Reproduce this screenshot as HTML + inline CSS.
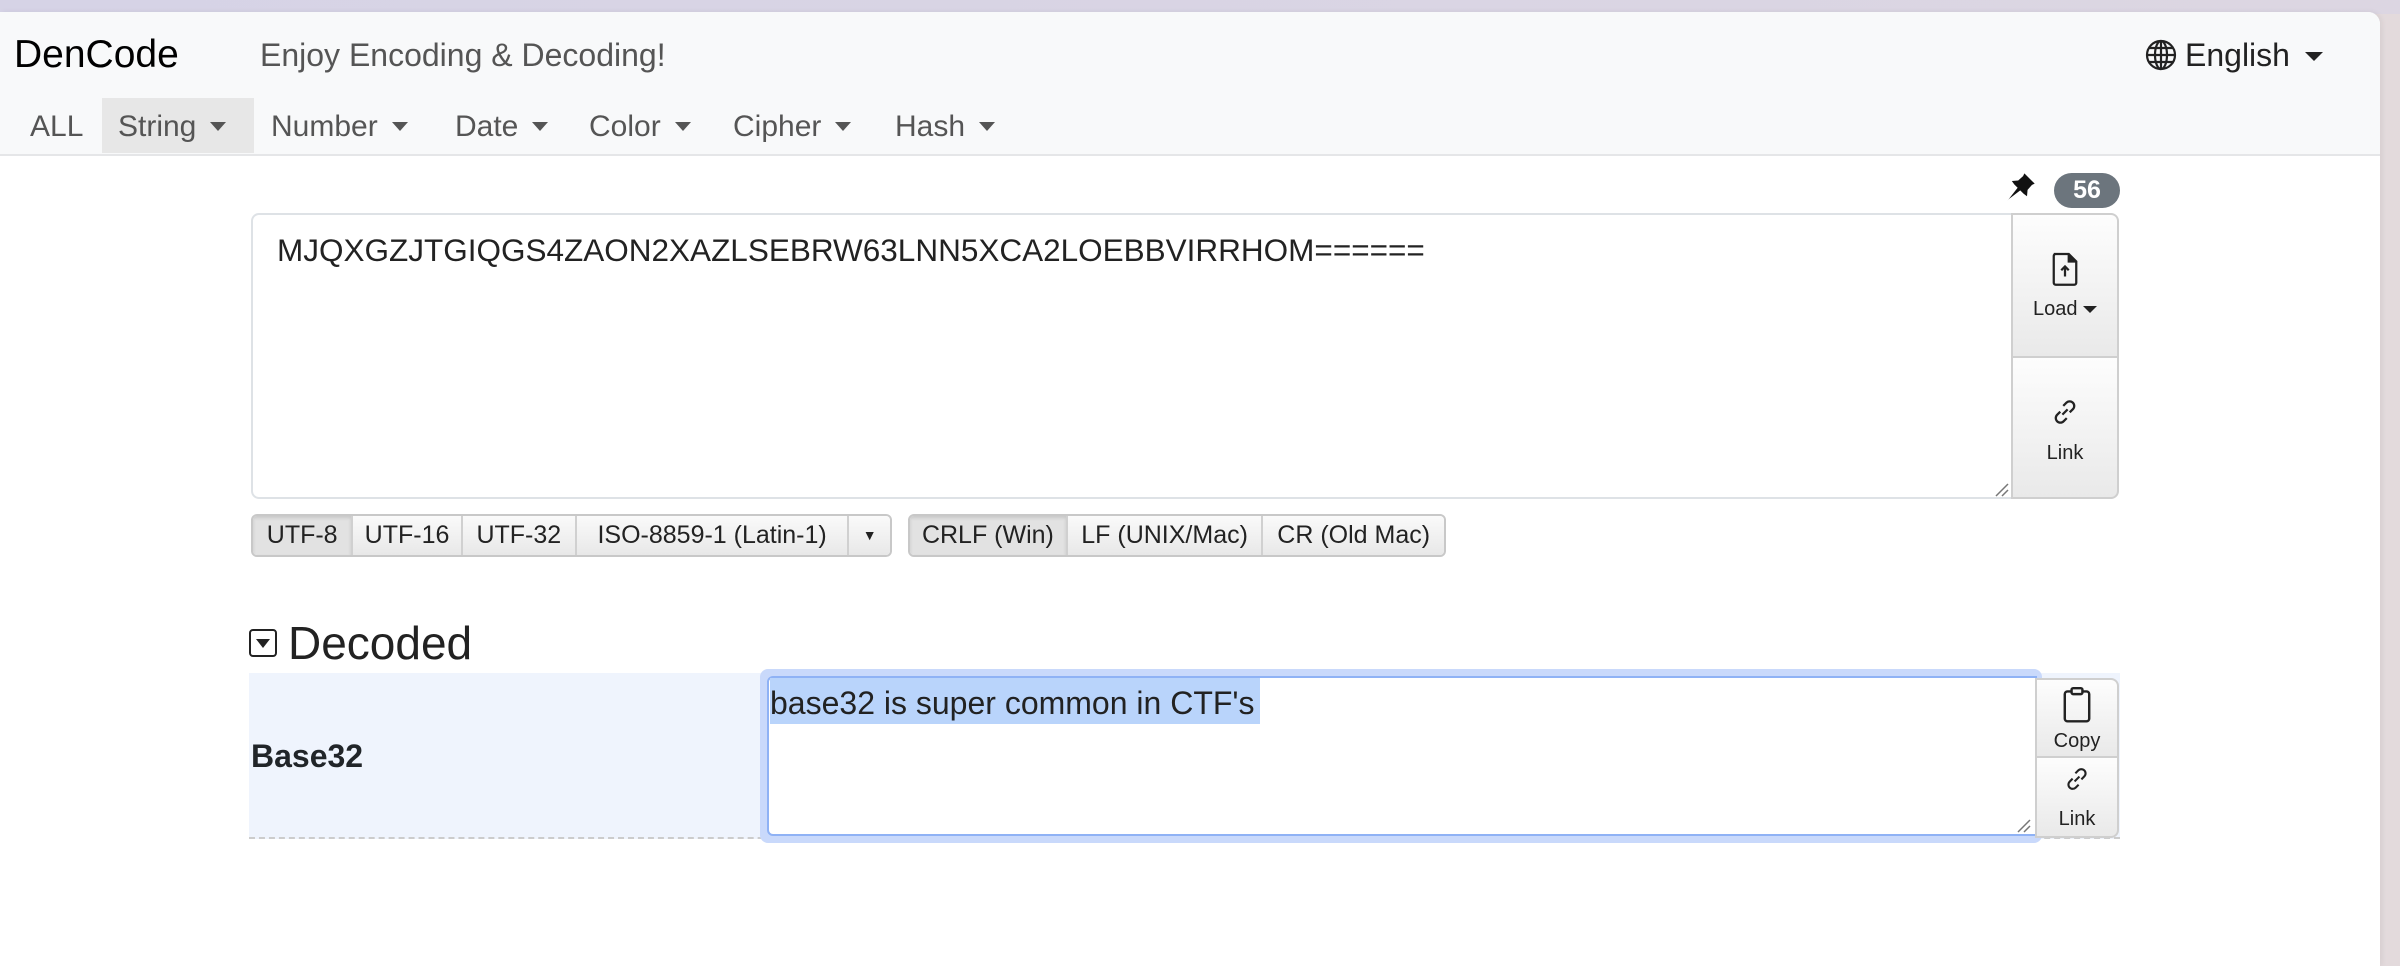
<!DOCTYPE html>
<html><head><meta charset="utf-8"><style>
*{box-sizing:border-box;margin:0;padding:0}
body{width:2400px;height:966px;overflow:hidden;background:#e3dadc;font-family:"Liberation Sans",sans-serif;position:relative;color:#212529}
.top{position:absolute;left:0;top:0;width:2400px;height:14px;background:linear-gradient(90deg,#d6d3e6,#dcd6e2)}
.win{position:absolute;left:0;top:12px;width:2380px;height:954px;background:#fff;border-top-right-radius:12px;overflow:hidden;box-shadow:2px 0 6px rgba(0,0,0,.06)}
.hdr{position:absolute;left:0;top:0;width:2380px;height:144px;background:#f8f9fa;border-bottom:2px solid #e5e6e8}
.a{position:absolute;white-space:nowrap}
.nav{font-size:30px;color:#555;top:95px;line-height:40px}
.car{display:inline-block;width:0;height:0;border-left:8px solid transparent;border-right:8px solid transparent;border-top:9px solid #555;vertical-align:middle;margin-left:14px;margin-top:-4px}
.ta{position:absolute;border:2px solid #dee2e6;background:#fff}
.btn{position:absolute;background:linear-gradient(#fdfdfd,#e9e9e9);border:2px solid #cfcfcf;text-align:center;font-size:20px;color:#222}
.grp{position:absolute;top:502px;height:43px;border:2px solid #c8c8c8;border-radius:6px;display:flex;overflow:hidden;font-size:25px;color:#222}
.grp div{height:100%;line-height:39px;text-align:center;border-right:2px solid #d0d0d0;background:linear-gradient(#fafafa,#e8e8e8)}
.grp div:last-child{border-right:none}
.grp .sel{background:#e2e2e2;box-shadow:inset 0 2px 3px rgba(0,0,0,.12)}
</style></head><body>
<div class="top"></div>
<div class="win">
<div class="hdr">
 <div class="a" style="left:14px;top:21px;font-size:39px;color:#000;line-height:44px">DenCode</div>
 <div class="a" style="left:260px;top:24px;font-size:32px;color:#555;line-height:38px">Enjoy Encoding &amp; Decoding!</div>
 <svg class="a" style="left:2145px;top:27px" width="32" height="32" viewBox="0 0 16 16" fill="none" stroke="#222" stroke-width="1.1"><circle cx="8" cy="8" r="7"/><ellipse cx="8" cy="8" rx="3" ry="7"/><line x1="8" y1="1" x2="8" y2="15"/><line x1="1" y1="8" x2="15" y2="8"/><path d="M2 4.5h12M2 11.5h12"/></svg>
 <div class="a" style="left:2185px;top:24px;font-size:32px;color:#222;line-height:38px">English</div>
 <div class="a" style="left:2305px;top:40px;width:0;height:0;border-left:9px solid transparent;border-right:9px solid transparent;border-top:9px solid #222"></div>
 <div class="a" style="left:102px;top:86px;width:152px;height:55px;background:#e7e7e7"></div>
 <div class="a nav" style="left:30px">ALL</div>
 <div class="a nav" style="left:118px">String<span class="car"></span></div>
 <div class="a nav" style="left:271px">Number<span class="car"></span></div>
 <div class="a nav" style="left:455px">Date<span class="car"></span></div>
 <div class="a nav" style="left:589px">Color<span class="car"></span></div>
 <div class="a nav" style="left:733px">Cipher<span class="car"></span></div>
 <div class="a nav" style="left:895px">Hash<span class="car"></span></div>
</div>
<svg class="a" style="left:2006px;top:160px" width="30" height="30" viewBox="0 0 16 16"><path d="M9.8.7 15.3 6.2 13.8 6.9 11.5 9.5 11.2 12.9 9.4 11.6 6.2 8.4 1.2 14.8 0.9 15.1 1.3 14.6 7.6 9.8 4.4 6.6 3.1 4.8 6.5 4.5 9.1 2.2Z" fill="#111"/></svg>
<div class="a" style="left:2054px;top:161px;width:66px;height:35px;border-radius:18px;background:#6c757d;color:#fff;font-weight:bold;font-size:25px;line-height:35px;text-align:center">56</div>
<div class="ta" style="left:251px;top:201px;width:1762px;height:286px;border-radius:8px 0 0 8px"></div>
<div class="a" style="left:277px;top:220px;font-size:31.5px;color:#222;line-height:36px">MJQXGZJTGIQGS4ZAON2XAZLSEBRW63LNN5XCA2LOEBBVIRRHOM======</div>
<svg class="a" style="left:1993px;top:469px" width="16" height="16"><path d="M15 3 3 15M15 9 9 15" stroke="#777" stroke-width="1.5"/></svg>
<div class="btn" style="left:2011px;top:201px;width:108px;height:145px;border-radius:0 8px 0 0">
 <svg style="margin-top:36px" width="30" height="36" viewBox="0 0 12 14" fill="none" stroke="#222" stroke-width="0.9"><path d="M1.5 1h6l3 3v8.5a.8.8 0 0 1-.8.8H2.3a.8.8 0 0 1-.8-.8V1.8a.8.8 0 0 1 .8-.8Z"/><path d="M7.5 1v3h3" fill="#222"/><path d="M6 10V6M4.5 7.5 6 6l1.5 1.5"/></svg>
 <div style="margin-top:5px">Load <span style="display:inline-block;border-left:7px solid transparent;border-right:7px solid transparent;border-top:7px solid #222;vertical-align:middle"></span></div>
</div>
<div class="btn" style="left:2011px;top:344px;width:108px;height:143px;border-radius:0 0 8px 0">
 <svg style="margin-top:40px" width="28" height="28" viewBox="0 0 16 16" fill="none" stroke="#222" stroke-width="1.3"><path d="M6.5 9.5 9.5 6.5"/><path d="M7 4.5 8.8 2.7a2.6 2.6 0 0 1 3.7 3.7L10.7 8.2"/><path d="M9 11.5 7.2 13.3a2.6 2.6 0 0 1-3.7-3.7L5.3 7.8"/></svg>
 <div style="margin-top:10px">Link</div>
</div>
<div class="grp" style="left:251px;width:641px">
 <div class="sel" style="width:101px">UTF-8</div><div style="width:110px">UTF-16</div><div style="width:115px">UTF-32</div><div style="width:274px">ISO-8859-1 (Latin-1)</div><div style="width:41px;font-size:14px">▼</div>
</div>
<div class="grp" style="left:908px;width:538px">
 <div class="sel" style="width:159px">CRLF (Win)</div><div style="width:197px">LF (UNIX/Mac)</div><div style="width:182px">CR (Old Mac)</div>
</div>
<div class="a" style="left:249px;top:617px;width:28px;height:28px;border:2.5px solid #222;border-radius:4px"><div style="position:absolute;left:5px;top:8px;border-left:7px solid transparent;border-right:7px solid transparent;border-top:9px solid #222"></div></div>
<div class="a" style="left:288px;top:604px;font-size:46px;line-height:54px;color:#222">Decoded</div>
<div class="a" style="left:249px;top:661px;width:1871px;height:166px;background:#eff4fd;border-bottom:2px dashed #ccc"></div>
<div class="a" style="left:251px;top:726px;font-size:32px;font-weight:bold;line-height:36px">Base32</div>
<div class="a" style="left:760px;top:657px;width:1282px;height:174px;border-radius:8px;background:#c9d9fb"></div>
<div class="ta" style="left:767px;top:664px;width:1270px;height:160px;border:2px solid #8fb2f5;border-radius:6px 0 0 6px"></div>
<div class="a" style="left:770px;top:666px;width:490px;height:46px;background:#b9d4fb"></div>
<div class="a" style="left:770px;top:673px;font-size:32px;line-height:36px;color:#222">base32 is super common in CTF's</div>
<svg class="a" style="left:2015px;top:805px" width="16" height="16"><path d="M15 3 3 15M15 9 9 15" stroke="#777" stroke-width="1.5"/></svg>
<div class="btn" style="left:2035px;top:666px;width:84px;height:80px;border-radius:0 8px 0 0">
 <svg style="margin-top:6px" width="34" height="38" viewBox="0 0 12 14" fill="none" stroke="#222" stroke-width="0.9"><rect x="1.5" y="2" width="9" height="11" rx="1"/><rect x="4" y="0.8" width="4" height="2.2" rx=".6" fill="#f6f6f6"/></svg>
 <div style="margin-top:0px">Copy</div>
</div>
<div class="btn" style="left:2035px;top:744px;width:84px;height:82px;border-radius:0 0 8px 0">
 <svg style="margin-top:8px" width="26" height="26" viewBox="0 0 16 16" fill="none" stroke="#222" stroke-width="1.3"><path d="M6.5 9.5 9.5 6.5"/><path d="M7 4.5 8.8 2.7a2.6 2.6 0 0 1 3.7 3.7L10.7 8.2"/><path d="M9 11.5 7.2 13.3a2.6 2.6 0 0 1-3.7-3.7L5.3 7.8"/></svg>
 <div style="margin-top:10px">Link</div>
</div>
</div>
</body></html>
